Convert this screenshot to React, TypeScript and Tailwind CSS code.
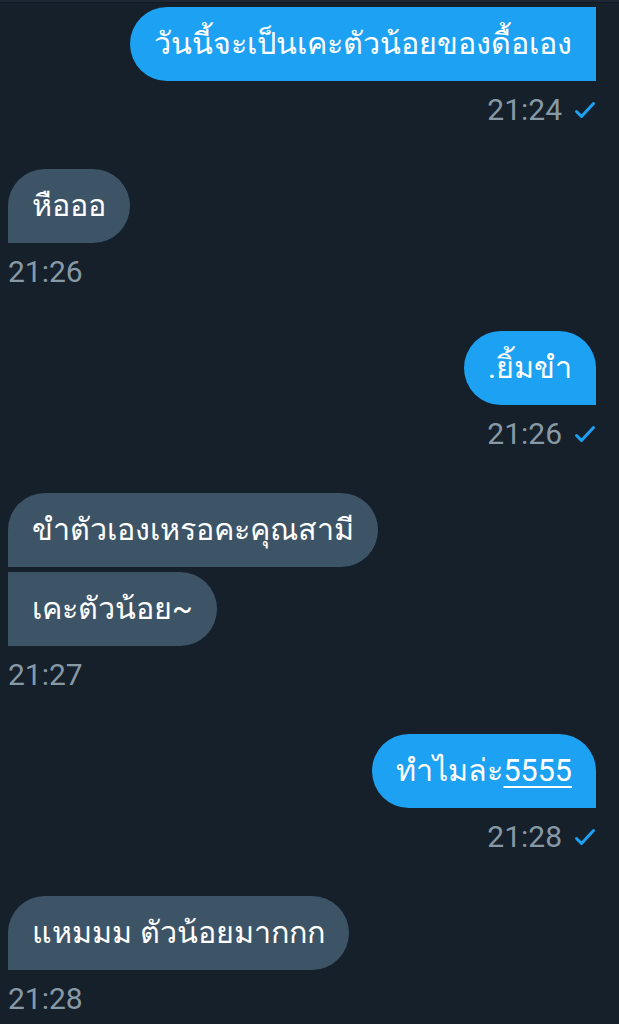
import { Fragment } from 'react';

type Side = 'me' | 'them';

type Group = {
  side: Side;
  time: string;
  bubbles: { text: React.ReactNode; shape: string }[];
};

const groups: Group[] = [
  {
    side: 'me',
    time: '21:24',
    bubbles: [{ text: 'วันนี้จะเป็นเคะตัวน้อยของดื้อเอง', shape: 'rounded-l-[37px]' }],
  },
  {
    side: 'them',
    time: '21:26',
    bubbles: [{ text: 'หือออ', shape: 'rounded-t-[37px] rounded-br-[37px]' }],
  },
  {
    side: 'me',
    time: '21:26',
    bubbles: [{ text: '.ยิ้มขำ', shape: 'rounded-t-[37px] rounded-bl-[37px]' }],
  },
  {
    side: 'them',
    time: '21:27',
    bubbles: [
      { text: 'ขำตัวเองเหรอคะคุณสามี', shape: 'rounded-tl-[37px] rounded-r-[37px]' },
      { text: 'เคะตัวน้อย~', shape: 'rounded-r-[37px]' },
    ],
  },
  {
    side: 'me',
    time: '21:28',
    bubbles: [
      {
        text: (
          <>
            ทำไมล่ะ<span className="underline decoration-[1.5px] underline-offset-[5px]">5555</span>
          </>
        ),
        shape: 'rounded-t-[37px] rounded-bl-[37px]',
      },
    ],
  },
  {
    side: 'them',
    time: '21:28',
    bubbles: [{ text: 'แหมมม ตัวน้อยมากกก', shape: 'rounded-t-[37px] rounded-br-[37px]' }],
  },
];

function Check() {
  return (
    <svg width="22" height="20" viewBox="0 0 22 20" className="ml-3">
      <path d="M2.5 11.5 L7.5 16.5 L19.5 3.5" fill="none" stroke="#1da1f2" strokeWidth="3" strokeLinecap="round" strokeLinejoin="round" />
    </svg>
  );
}

export default function App() {
  return (
    <div className="min-h-[1024px] w-[619px] bg-[#15202b] font-['Roboto','Noto_Sans',sans-serif]">
      <div className="h-[3px] bg-[#1c2733] border-b border-[#111a23]" />
      <div className="flex flex-col pl-2 pr-[23px] pt-1">
        {groups.map((g, i) => (
          <div
            key={i}
            className={`flex flex-col ${g.side === 'me' ? 'items-end' : 'items-start'} ${i === 0 ? '' : 'mt-[43px]'}`}
          >
            {g.bubbles.map((b, j) => (
              <Fragment key={j}>
                <div
                  className={`flex h-[74px] items-center px-6 text-[30.5px] leading-[40px] text-white ${
                    g.side === 'me' ? 'bg-[#1da1f2]' : 'bg-[#3d5466]'
                  } ${b.shape} ${j > 0 ? 'mt-[5px]' : ''}`}
                >
                  {b.text}
                </div>
              </Fragment>
            ))}
            <div className="mt-[13px] flex h-8 items-center text-[30px] leading-8 text-[#8899a6]">
              <span>{g.time}</span>
              {g.side === 'me' && <Check />}
            </div>
          </div>
        ))}
      </div>
    </div>
  );
}
